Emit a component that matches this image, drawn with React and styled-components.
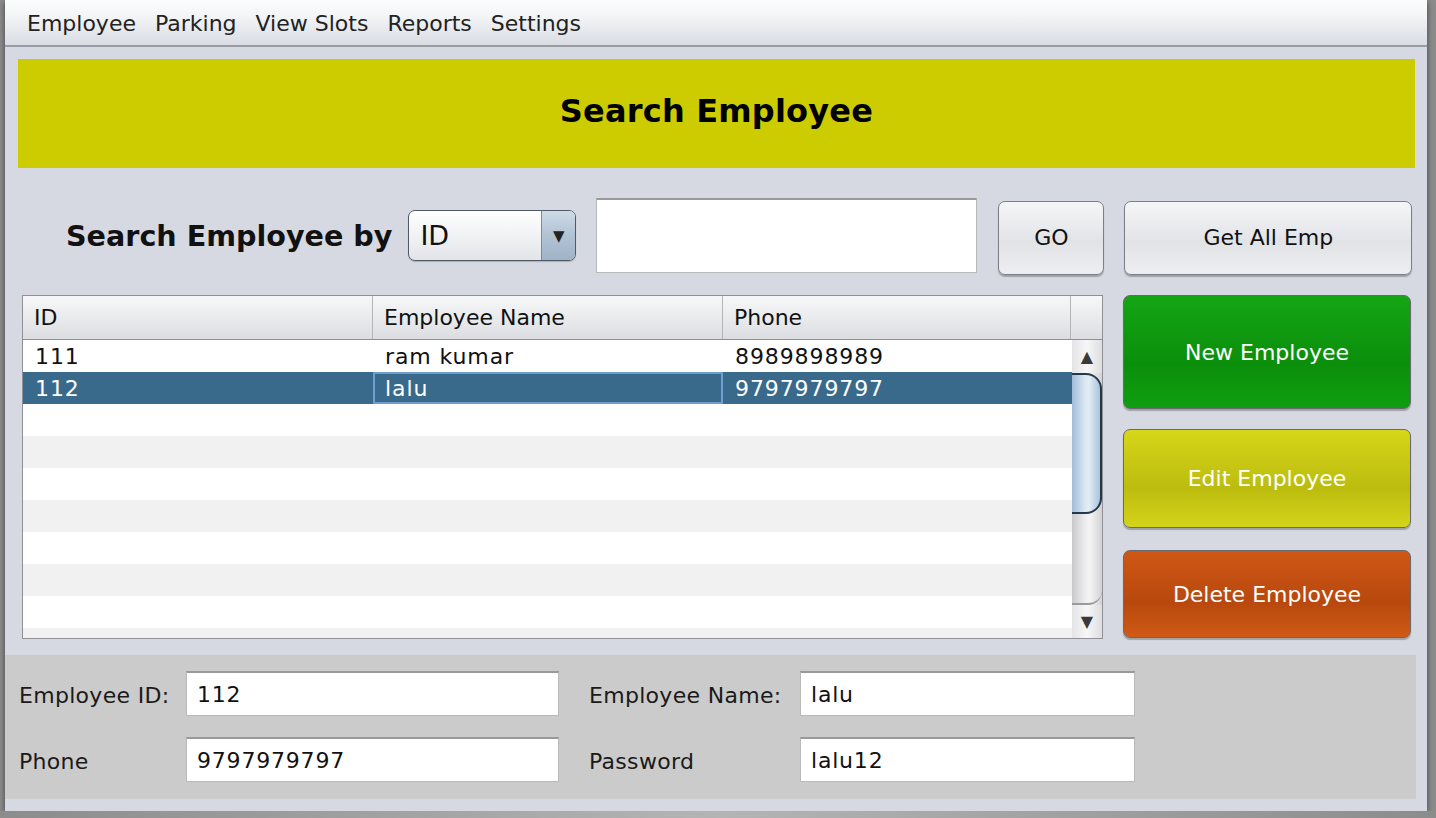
import React from "react";
import styled, { createGlobalStyle } from "styled-components";

const GlobalStyle = createGlobalStyle`
  html, body {
    margin: 0;
    padding: 0;
    background: linear-gradient(90deg, #8c8c8c 0%, #b4b4b4 50%, #8c8c8c 100%);
    font-family: "DejaVu Sans", "Liberation Sans", sans-serif;
    overflow: hidden;
  }
  * { box-sizing: border-box; }
`;

const Window = styled.div`
  width: 1422px;
  height: 811px;
  margin-left: 5px;
  background: #d6d9e1;
  display: flex;
  flex-direction: column;
  box-shadow: 0 2px 6px rgba(0, 0, 0, 0.55);
`;

const MenuBar = styled.div`
  height: 47px;
  display: flex;
  align-items: center;
  gap: 19px;
  padding-left: 22px;
  background: linear-gradient(180deg, #fbfcfc 0%, #f4f5f6 35%, #d9dce3 100%);
  border-bottom: 2px solid #9a9ca5;
`;

const MenuItem = styled.span`
  font-size: 22px;
  color: #222;
  padding-top: 2px;
`;

const Content = styled.div`
  padding: 12px 12px 0 13px;
  display: flex;
  flex-direction: column;
`;

const Header = styled.div`
  height: 109px;
  padding-bottom: 5px;
  background: #cccc00;
  display: flex;
  align-items: center;
  justify-content: center;
  font-size: 32px;
  font-weight: bold;
  color: #000;
  letter-spacing: 0.2px;
`;

const SearchRow = styled.div`
  margin-top: 29px;
  height: 77px;
  display: flex;
  align-items: center;
  padding-left: 48px;
`;

const SearchLabel = styled.span`
  flex: none;
  white-space: nowrap;
  font-size: 28.6px;
  font-weight: bold;
  color: #111;
  margin-right: 16px;
`;

const Combo = styled.div`
  flex: none;
  width: 168px;
  height: 51px;
  border: 1px solid #4f5a66;
  border-radius: 7px;
  display: flex;
  overflow: hidden;
  background: linear-gradient(180deg, #ffffff 0%, #f1f2f4 50%, #e2e4e8 100%);
  box-shadow: 0 1px 1px rgba(0, 0, 0, 0.2);
  margin-right: 20px;
`;

const ComboValue = styled.div`
  flex: 1;
  display: flex;
  align-items: center;
  padding-left: 11px;
  font-size: 27px;
  color: #111;
`;

const ComboArrow = styled.div`
  width: 34px;
  border-left: 1px solid #7d8a98;
  background: linear-gradient(180deg, #cfdae6 0%, #b1c2d4 50%, #9fb3c8 100%);
  display: flex;
  align-items: center;
  justify-content: center;
  font-size: 15px;
  color: #222;
`;

const TextField = styled.div`
  flex: none;
  width: ${(p) => p.w}px;
  height: ${(p) => p.h}px;
  background: #fff;
  border: 1px solid #b9b9b9;
  border-top: 2px solid #999;
  display: flex;
  align-items: center;
  padding-left: 10px;
  font-size: 22px;
  letter-spacing: 0.8px;
  color: #111;
  margin-right: ${(p) => p.gap || 0}px;
`;

const Button = styled.button`
  width: ${(p) => p.w}px;
  height: ${(p) => p.h}px;
  flex: none;
  border: 1px solid ${(p) => (p.tone ? "#666a70" : "#7b7e84")};
  border-radius: 7px;
  font-family: "DejaVu Sans", "Liberation Sans", sans-serif;
  font-size: 22px;
  color: ${(p) => (p.tone ? "#fff" : "#111")};
  background: ${(p) =>
    p.tone === "green"
      ? "linear-gradient(180deg, #14a514 0%, #0b8f0b 60%, #109e10 100%)"
      : p.tone === "yellow"
      ? "linear-gradient(180deg, #d6d61a 0%, #bcbc0e 60%, #d4d41a 100%)"
      : p.tone === "orange"
      ? "linear-gradient(180deg, #cf5715 0%, #b8480e 60%, #d05a15 100%)"
      : "linear-gradient(180deg, #f5f6f8 0%, #e2e3e7 55%, #eceef2 100%)"};
  box-shadow: 0 2px 1px rgba(0, 0, 0, 0.25);
  padding: 0;
  margin-top: ${(p) => p.dy || 0}px;
  margin-right: ${(p) => p.gap || 0}px;
  margin-bottom: ${(p) => p.below || 0}px;
`;

const MainRow = styled.div`
  margin-top: 21px;
  padding: 0 4px;
  display: flex;
  gap: 20px;
`;

const Table = styled.div`
  width: 1082px;
  height: 344px;
  border: 1px solid #8e9096;
  background: #fff;
  display: flex;
  flex-direction: column;
  overflow: hidden;
`;

const HeaderRow = styled.div`
  height: 44px;
  display: grid;
  grid-template-columns: 350px 350px 348px 1fr;
  background: linear-gradient(180deg, #f7f7f8 0%, #eaebed 50%, #dcdde1 100%);
  border-bottom: 1px solid #8e9096;
`;

const HeaderCell = styled.div`
  display: flex;
  align-items: center;
  padding-left: 11px;
  font-size: 22px;
  color: #111;
  border-right: ${(p) => (p.last ? "none" : "1px solid #b3b5ba")};
`;

const Body = styled.div`
  flex: 1;
  display: flex;
  overflow: hidden;
`;

const Rows = styled.div`
  flex: 1;
  overflow: hidden;
`;

const Row = styled.div`
  height: 32px;
  display: grid;
  grid-template-columns: 350px 350px 1fr;
  background: ${(p) => (p.selected ? "#396a8b" : p.striped ? "#f1f1f1" : "#fff")};
  color: ${(p) => (p.selected ? "#fff" : "#111")};
`;

const Cell = styled.div`
  display: flex;
  align-items: center;
  font-size: 22px;
  letter-spacing: 0.9px;
  border: ${(p) => (p.focused ? "2px solid #6e9dcf" : "none")};
  padding-left: ${(p) => (p.focused ? "10px" : "12px")};
`;

const ScrollBar = styled.div`
  width: 30px;
  display: flex;
  flex-direction: column;
  background: linear-gradient(90deg, #c9c9cb 0%, #eeeeef 45%, #f4f4f5 60%, #d2d2d4 100%);
`;

const ScrollArrow = styled.div`
  height: 33px;
  display: flex;
  align-items: center;
  justify-content: center;
  font-size: 16px;
  color: #3a3a3a;
  background: linear-gradient(90deg, #e4e4e6 0%, #f7f7f8 50%, #dedee0 100%);
`;

const Thumb = styled.div`
  height: 141px;
  border: 2px solid #23384c;
  border-left: none;
  border-radius: 0 16px 16px 0;
  background: linear-gradient(90deg, #9fbcd6 0%, #d9e6f2 45%, #e3edf6 60%, #a9c3da 100%);
`;

const Track = styled.div`
  flex: 1;
  border-bottom-right-radius: 14px;
  border-bottom: 2px solid #9a9a9c;
`;

const SideButtons = styled.div`
  display: flex;
  flex-direction: column;
`;

const BottomPanel = styled.div`
  margin-top: 16px;
  margin-right: 11px;
  height: 144px;
  background: #cbcbcb;
  display: grid;
  grid-template-columns: 167px 373px 241px 335px;
  row-gap: 21px;
  align-content: start;
  align-items: center;
  padding: 16px 0 0 14px;
`;

const FieldLabel = styled.span`
  white-space: nowrap;
  font-size: 22px;
  letter-spacing: 0.3px;
  color: #1a1a1a;
  padding-top: 3px;
  padding-left: ${(p) => (p.second ? "30px" : "0")};
`;

const rows = [
  { id: "111", name: "ram kumar", phone: "8989898989" },
  { id: "112", name: "lalu", phone: "9797979797", selected: true },
];

export default function App() {
  const empty = Array.from({ length: 8 });
  return (
    <>
      <GlobalStyle />
      <Window>
        <MenuBar>
          {["Employee", "Parking", "View Slots", "Reports", "Settings"].map((m) => (
            <MenuItem key={m}>{m}</MenuItem>
          ))}
        </MenuBar>
        <Content>
          <Header>Search Employee</Header>
          <SearchRow>
            <SearchLabel>Search Employee by</SearchLabel>
            <Combo>
              <ComboValue>ID</ComboValue>
              <ComboArrow>▼</ComboArrow>
            </Combo>
            <TextField w={381} h={75} gap={21} />
            <Button w={106} h={74} dy={4} gap={20}>GO</Button>
            <Button w={288} h={74} dy={4}>Get All Emp</Button>
          </SearchRow>
          <MainRow>
            <Table>
              <HeaderRow>
                <HeaderCell>ID</HeaderCell>
                <HeaderCell>Employee Name</HeaderCell>
                <HeaderCell>Phone</HeaderCell>
                <HeaderCell last />
              </HeaderRow>
              <Body>
                <Rows>
                  {rows.map((r) => (
                    <Row key={r.id} selected={r.selected}>
                      <Cell>{r.id}</Cell>
                      <Cell focused={r.selected}>{r.name}</Cell>
                      <Cell>{r.phone}</Cell>
                    </Row>
                  ))}
                  {empty.map((_, i) => (
                    <Row key={i} striped={i % 2 === 1}>
                      <Cell />
                      <Cell />
                      <Cell />
                    </Row>
                  ))}
                </Rows>
                <ScrollBar>
                  <ScrollArrow>▲</ScrollArrow>
                  <Thumb />
                  <Track />
                  <ScrollArrow>▼</ScrollArrow>
                </ScrollBar>
              </Body>
            </Table>
            <SideButtons>
              <Button w={288} h={114} tone="green" below={20}>New Employee</Button>
              <Button w={288} h={99} tone="yellow" below={22}>Edit Employee</Button>
              <Button w={288} h={88} tone="orange">Delete Employee</Button>
            </SideButtons>
          </MainRow>
        </Content>
        <BottomPanel>
          <FieldLabel>Employee ID:</FieldLabel>
          <TextField w={373} h={45}>112</TextField>
          <FieldLabel second>Employee Name:</FieldLabel>
          <TextField w={335} h={45}>lalu</TextField>
          <FieldLabel>Phone</FieldLabel>
          <TextField w={373} h={45}>9797979797</TextField>
          <FieldLabel second>Password</FieldLabel>
          <TextField w={335} h={45}>lalu12</TextField>
        </BottomPanel>
      </Window>
    </>
  );
}
